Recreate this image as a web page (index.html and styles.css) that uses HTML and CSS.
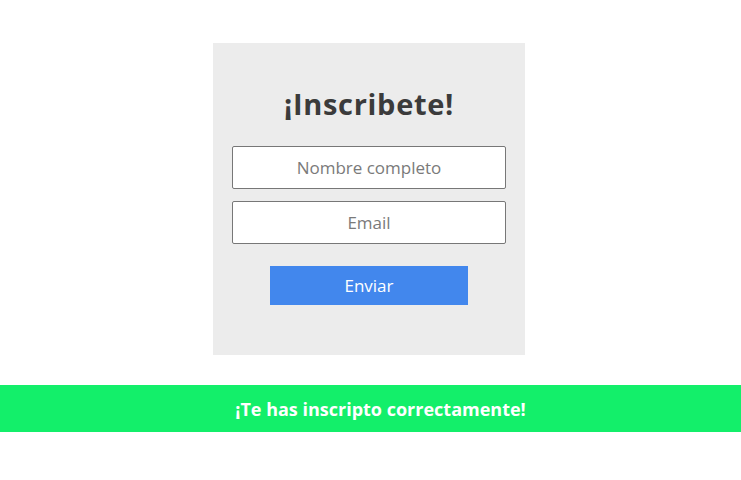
FILE: index.html
```html
<!DOCTYPE html>
<html lang="es">
<head>
<meta charset="utf-8">
<link rel="stylesheet" href="styles.css">
</head>
<body>
<main class="page">
  <form class="card">
    <h1 class="title">¡Inscribete!</h1>
    <input class="field" type="text" placeholder="Nombre completo">
    <input class="field" type="email" placeholder="Email">
    <button class="submit" type="button">Enviar</button>
  </form>
  <div class="banner">¡Te has inscripto correctamente!</div>
</main>
</body>
</html>
```
FILE: styles.css
```css
* { box-sizing: border-box; }
html, body { margin: 0; background: #fff; }
body { font-family: "Open Sans", "Liberation Sans", sans-serif; }
.page {
  display: flex;
  flex-direction: column;
  align-items: center;
  padding-top: 43px;
}
.card {
  width: 312px;
  height: 312px;
  margin-right: 3px;
  background: #ececec;
  display: flex;
  flex-direction: column;
  align-items: center;
  padding: 41px 20px 0;
}
.title {
  margin: 0 0 22px;
  font-size: 29px;
  line-height: 40px;
  font-weight: 700;
  letter-spacing: 0.7px;
  color: #3b3b3b;
}
.field {
  width: 274px;
  height: 43px;
  border: 1px solid #777;
  border-radius: 2px;
  background: #fff;
  font-family: inherit;
  font-size: 17px;
  text-align: center;
  color: #555;
  margin: 0 0 12px;
  outline: none;
  padding: 0 8px;
}
.field::placeholder { color: #7a7a7a; }
.submit {
  margin-top: 10px;
  width: 198px;
  height: 39px;
  border: none;
  background: #4287ed;
  color: #fff;
  font-family: inherit;
  font-size: 17px;
  padding: 0;
}
.banner {
  margin-top: 30px;
  width: 100%;
  height: 47px;
  padding-left: 20px;
  background: #13ef6a;
  color: #fff;
  font-weight: 700;
  font-size: 18px;
  display: flex;
  align-items: center;
  justify-content: center;
}
```
